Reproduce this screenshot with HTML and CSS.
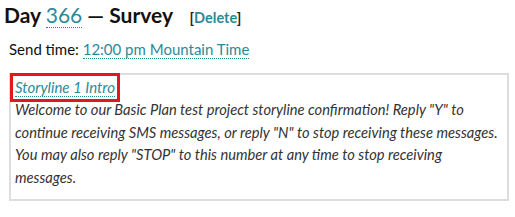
FILE: index.html
```html
<!DOCTYPE html>
<html>
<head>
<meta charset="utf-8">
<link rel="stylesheet" href="styles.css">
</head>
<body>
<div class="page">
  <h2 class="title">Day <span class="day-num">366</span> — Survey <span class="del">[<a class="del-link">Delete</a>]</span></h2>
  <div class="send">Send time: <span class="send-val">12:00 pm Mountain Time</span></div>
  <div class="box">
    <div class="story"><span class="story-link">Storyline 1 Intro</span></div>
    <div class="msg">Welcome to our Basic Plan test project storyline confirmation! Reply "Y" to continue receiving SMS messages, or reply "N" to stop receiving these messages. You may also reply "STOP" to this number at any time to stop receiving messages.</div>
  </div>
</div>
</body>
</html>
```
FILE: styles.css
```css
html, body { margin: 0; padding: 0; background: #fff; }
body { font-family: Lato, "Open Sans", sans-serif; color: #111; }
.page { padding: 0 6px 0 4px; }
.title { margin: 0; padding-top: 2px; font-size: 21px; font-weight: 700; line-height: 26px; color: #111; }
.day-num { color: #2b8a9a; font-weight: 400; border-bottom: 1px dotted #2b8a9a; }
.del { font-size: 14.5px; margin-left: 12px; color: #222; }
.del-link { color: #2b8a9a; }
.send { margin: 8px 0 0 5px; font-size: 15px; line-height: 20px; color: #111; }
.send-val { color: #2b8a9a; border-bottom: 1px dotted #2b8a9a; }
.box { margin: 14px 0 0 5px; border: 2px solid #ddd; padding: 2px 3px 10px 4px; }
.story { line-height: 21px; font-size: 15px; }
.story-link { font-style: italic; color: #2b8a9a; border-bottom: 1px dotted #2b8a9a; outline: 3px solid #e0191f; outline-offset: 2px; }
.msg { font-style: italic; font-size: 14.7px; line-height: 22.7px; color: #333; }
```
